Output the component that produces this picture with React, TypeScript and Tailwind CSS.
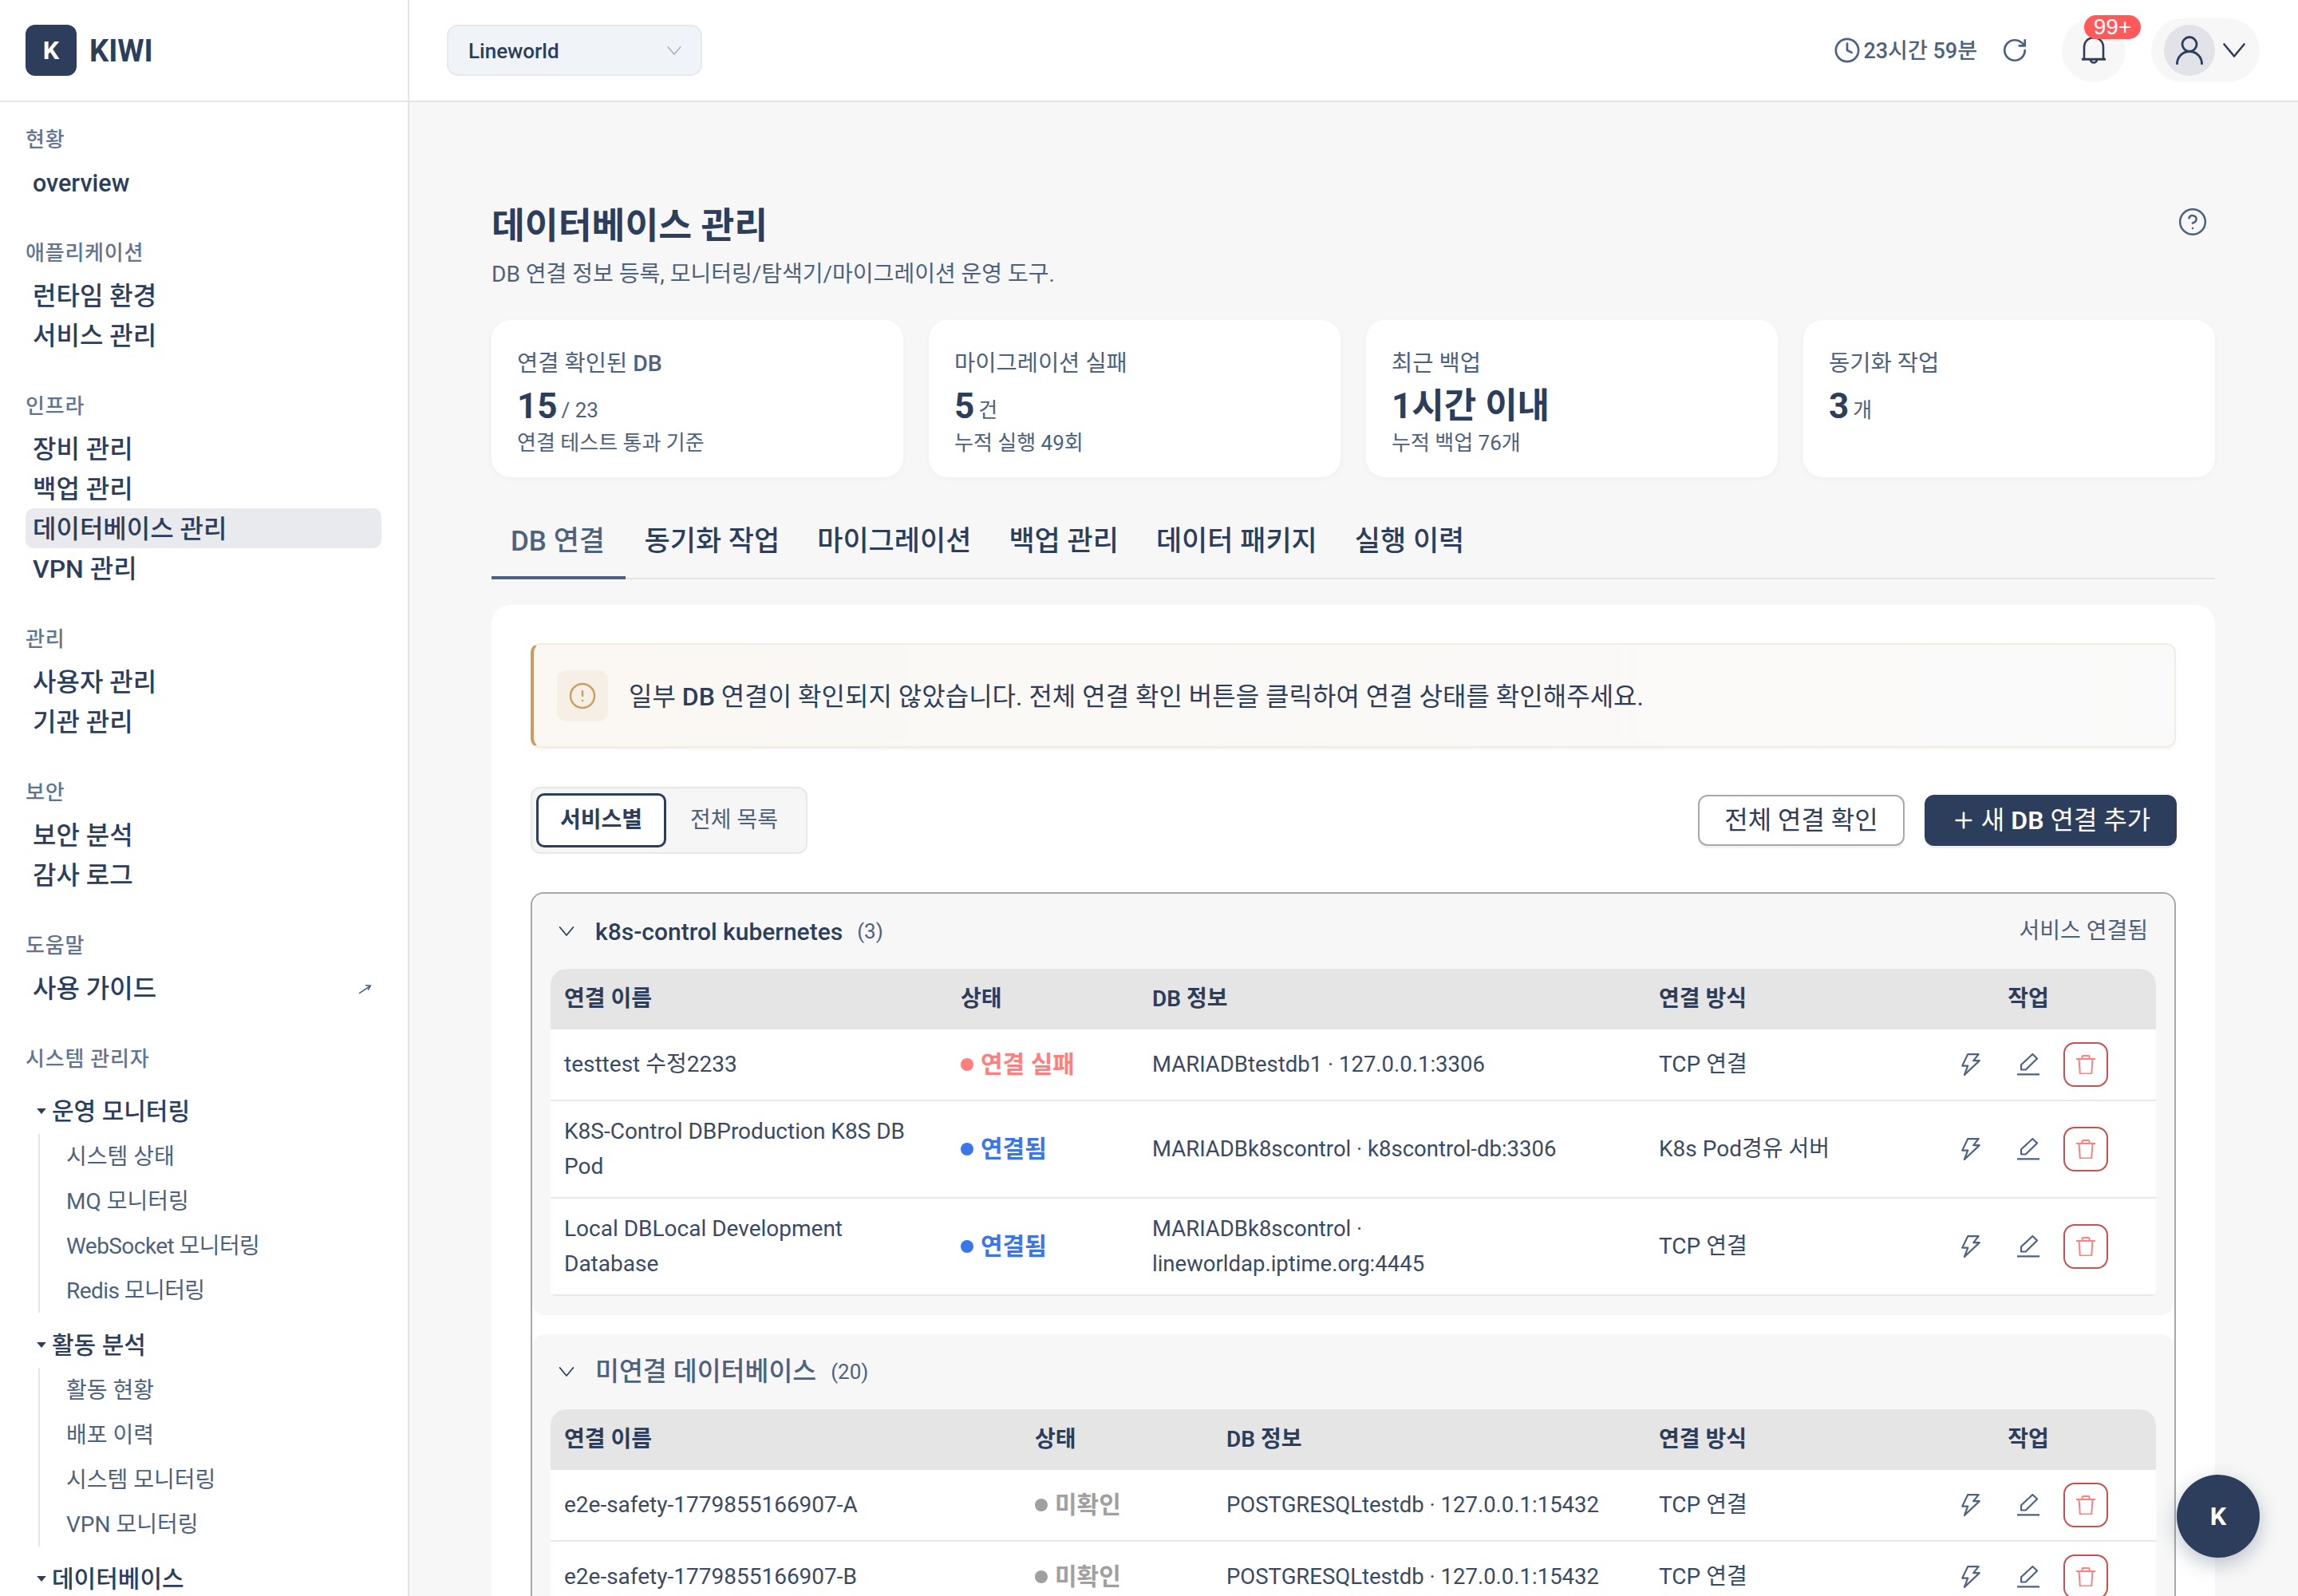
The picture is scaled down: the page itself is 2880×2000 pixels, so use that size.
import React from 'react';
import { Clock, RotateCw, CircleHelp, CircleAlert, Plus } from 'lucide-react';

const Chevron = ({ className = '' }: { className?: string }) => (
  <svg viewBox="0 0 28 18" fill="none" stroke="currentColor" strokeWidth="2.6" strokeLinecap="round" strokeLinejoin="round" className={className}>
    <path d="M1.5 1.5 14 16.5 26.5 1.5" />
  </svg>
);

const BoltIcon = () => (
  <svg viewBox="0 0 22 26" fill="none" stroke="#4d6180" strokeWidth="2" strokeLinejoin="round" className="h-[28px] w-[24px]">
    <path d="M7.5 1H20l-6 7.5h7L3.5 25l4-10.5H1z" />
  </svg>
);

const PencilIcon = () => (
  <svg viewBox="0 0 26 26" fill="none" stroke="#4d6180" strokeWidth="2" strokeLinejoin="round" className="h-[28px] w-[28px]">
    <path d="M4.7 19v-5.7L18 1l5.3 5L10 19z" />
    <path d="M0 24.5h26" strokeLinecap="round" />
  </svg>
);

const TrashIcon = () => (
  <svg viewBox="0 0 24 24" fill="none" stroke="#ff8080" strokeWidth="2" strokeLinecap="round" strokeLinejoin="round" className="h-[24px] w-[24px]">
    <path d="M0.5 5h23" />
    <path d="M3.5 5l1.2 17.5c0 .6.5 1 1 1h12.6c.5 0 1-.4 1-1L20.500 5" />
    <path d="M7.500 5V2c0-.6.5-1 1-1h7c.5 0 1 .4 1 1v3" />
  </svg>
);

const BellIcon = () => (
  <svg viewBox="0 0 30 34" fill="none" stroke="#2c3e5c" strokeWidth="2.6" strokeLinecap="round" className="h-[34px] w-[30px]">
    <path d="M3 28V13.500C3 6 8 1.300 15 1.300S27 6 27 13.500V28" />
    <path d="M1 28.300h28" strokeWidth="3" />
    <path d="M11 28.500a4 4 0 0 0 8 0" />
  </svg>
);

const PersonIcon = () => (
  <svg viewBox="0 0 34 36" fill="none" stroke="#2c3e5c" strokeWidth="2.800" strokeLinecap="round" className="h-[36px] w-[34px]">
    <circle cx="17" cy="10.500" r="9" />
    <path d="M1.500 35a15.500 15.500 0 0 1 31 0" />
  </svg>
);

const Section = ({ label, items, active }: { label: string; items: string[]; active?: string }) => (
  <div>
    <div className="mb-[10px] flex h-[36px] items-center text-[26px] font-medium tracking-[0.03em] text-[#64748f]">{label}</div>
    {items.map((item) => (
      <div
        key={item}
        className={`flex h-[50px] items-center rounded-[10px] px-[9px] font-medium text-[#2c3e5c] ${item === 'overview' ? 'pt-[3px] text-[30.500px]' : 'pt-[1px] text-[32px]'} ${item === active ? 'bg-[#e9eaee]' : ''}`}
      >
        {item}
        {item === '사용 가이드' && (
          <svg viewBox="0 0 16 12" fill="none" stroke="#4d6180" strokeWidth="1.500" className="mb-[-2px] ml-auto mr-[3px] h-[13px] w-[17px]">
            <path d="M1 11 14.500 2M8.500 1.500l6 .5-3 5" />
          </svg>
        )}
      </div>
    ))}
  </div>
);

const SubGroup = ({ label, items }: { label: string; items: string[] }) => (
  <div className="mt-[15px] first:mt-0">
    <div className="flex h-[50px] items-center pl-[14px] text-[30px] font-medium text-[#2c3e5c]">
      <svg viewBox="0 0 10 6" className="mr-[7px] h-[7px] w-[12px] fill-[#2c3e5c]">
        <path d="M0 0h10L5 6z" />
      </svg>
      {label}
    </div>
    {items.length > 0 && (
      <div className="ml-[16px] mt-[4px] border-l-2 border-[#e5e5e5] pl-[33px]">
        {items.map((item) => (
          <div
            key={item}
            className={`flex h-[56px] items-center pt-[1px] text-[28px] text-[#4d6180] ${/WebSocket|Redis/.test(item) ? 'tracking-[-0.02em]' : ''}`}
          >
            {item}
          </div>
        ))}
      </div>
    )}
  </div>
);

const Sidebar = () => (
  <aside className="flex h-full w-[513px] shrink-0 flex-col overflow-hidden border-r-2 border-[#e5e5e5] bg-white">
    <div className="flex h-[128px] shrink-0 items-center gap-[16px] border-b-2 border-[#e5e5e5] pl-[32px]">
      <div className="flex h-[64px] w-[64px] items-center justify-center rounded-[12px] bg-[#2c3e5c] text-[32px] font-bold text-white">K</div>
      <div className="pt-[2px] text-[38px] font-bold text-[#2c3e5c]">KIWI</div>
    </div>
    <nav className="flex flex-col gap-[46px] pl-[32px] pr-[33px] pt-[29px]">
      <Section label="현황" items={['overview']} />
      <Section label="애플리케이션" items={['런타임 환경', '서비스 관리']} />
      <Section label="인프라" items={['장비 관리', '백업 관리', '데이터베이스 관리', 'VPN 관리']} active="데이터베이스 관리" />
      <Section label="관리" items={['사용자 관리', '기관 관리']} />
      <Section label="보안" items={['보안 분석', '감사 로그']} />
      <Section label="도움말" items={['사용 가이드']} />
      <div>
        <div className="mb-[22px] flex h-[36px] items-center text-[26px] font-medium tracking-[0.03em] text-[#64748f]">시스템 관리자</div>
        <SubGroup label="운영 모니터링" items={['시스템 상태', 'MQ 모니터링', 'WebSocket 모니터링', 'Redis 모니터링']} />
        <SubGroup label="활동 분석" items={['활동 현황', '배포 이력', '시스템 모니터링', 'VPN 모니터링']} />
        <SubGroup label="데이터베이스" items={[]} />
      </div>
    </nav>
  </aside>
);

const TopBar = () => (
  <header className="flex h-[128px] shrink-0 items-center border-b-2 border-[#e5e5e5] bg-white pl-[47px] pr-[48px]">
    <div className="flex h-[64px] w-[320px] items-center justify-between rounded-[14px] border-2 border-[#e6e9ee] bg-[#f0f3f8] pl-[25px] pr-[24px] text-[26px] font-medium text-[#2c3e5c]">
      <span className="pt-[2px]">Lineworld</span>
      <Chevron className="h-[11px] w-[18px] text-[#a9b3c2]" />
    </div>
    <div className="ml-auto flex items-center text-[#4d6180]">
      <Clock size={34} strokeWidth={1.9} className="mr-[3px]" />
      <span className="pt-[2px] text-[27px] font-medium">23시간 59분</span>
      <RotateCw size={34} strokeWidth={1.9} className="ml-[30px] mr-[-2px]" />
    </div>
    <div className="relative ml-[44px] flex h-[80px] w-[80px] items-center justify-center rounded-full bg-[#f7f7f7]">
      <BellIcon />
      <span className="absolute left-[28px] top-[-4px] flex h-[30px] w-[71px] items-center justify-center rounded-full bg-[#ff5a5a] font-['Liberation_Sans',sans-serif] text-[28px] text-white">
        99+
      </span>
    </div>
    <div className="ml-[32px] flex h-[80px] w-[136px] items-center rounded-full bg-[#f7f7f7] pl-[16px]">
      <div className="flex h-[64px] w-[64px] items-center justify-center rounded-full bg-[#e1e3e8]">
        <PersonIcon />
      </div>
      <Chevron className="ml-[10px] h-[18px] w-[28px] text-[#2c3e5c]" />
    </div>
  </header>
);

const StatCard = ({ label, value, unit, sub }: { label: React.ReactNode; value: string; unit?: string; sub?: string }) => (
  <div className="h-[197px] rounded-[24px] bg-white px-[32px] pt-[35px] shadow-[0_2px_8px_rgba(0,0,0,0.03)]">
    <div className="text-[28.500px] leading-[40px] text-[#4d6180]">{label}</div>
    <div className="mt-[7px] flex h-[52px] items-end leading-[52px]">
      <span className="text-[44px] font-bold text-[#2c3e5c]">{value}</span>
      {unit && <span className="mb-[-5px] ml-[5px] text-[26px] text-[#4d6180]">{unit}</span>}
    </div>
    {sub && <div className="mt-[2px] text-[26px] leading-[36px] text-[#4d6180]">{sub}</div>}
  </div>
);

const tabs = ['DB 연결', '동기화 작업', '마이그레이션', '백업 관리', '데이터 패키지', '실행 이력'];

const Tabs = () => (
  <div className="mt-[32px] flex border-b-2 border-[#e5e5e5]">
    {tabs.map((tab, i) => (
      <div
        key={tab}
        className={`mb-[-2px] flex h-[96px] items-center border-b-4 pt-[6px] text-[35px] font-medium ${
          i === 0 ? 'w-[168px] border-[#4d6180] pl-[24px] text-[#4d6180]' : 'border-transparent px-[23.500px] text-[#2c3e5c]'
        }`}
      >
        {tab}
      </div>
    ))}
  </div>
);

const Alert = () => (
  <div className="flex h-[131px] items-center rounded-[12px] border-2 border-l-4 border-[#f3ece3] border-l-[#c99d5e] bg-gradient-to-r from-[#fbf8f3] to-[#fafafa] pl-[29px] shadow-[0_2px_3px_rgba(0,0,0,0.05)]">
    <div className="flex h-[64px] w-[64px] items-center justify-center rounded-[12px] bg-[#f5efe6]">
      <CircleAlert size={36} strokeWidth={1.6} className="text-[#c99d5e]" />
    </div>
    <div className="ml-[26px] pt-[2px] text-[32px] text-[#2c3e5c]">
      일부 <span className="font-medium">DB</span> 연결이 확인되지 않았습니다. 전체 연결 확인 버튼을 클릭하여 연결 상태를 확인해주세요.
    </div>
  </div>
);

const Toolbar = () => (
  <div className="mt-[49px] flex items-center justify-between">
    <div className="flex h-[84px] w-[347px] items-center rounded-[12px] border-2 border-[#e8e8e8] bg-[#f6f6f6] pl-[5px]">
      <div className="flex h-[68px] w-[163px] items-center justify-center rounded-[10px] border-[3px] border-[#2c3e5c] bg-white text-[28px] font-bold text-[#2c3e5c]">
        서비스별
      </div>
      <div className="px-[30px] pb-[1px] text-[28px] text-[#4d6180]">전체 목록</div>
    </div>
    <div className="mr-[-1px] flex gap-[25px]">
      <div className="flex h-[64px] w-[259px] items-center justify-center rounded-[12px] border-2 border-[#a8a8a8] bg-white text-[32px] text-[#2c3e5c] shadow-[0_3px_0_#f3f3f3]">
        전체 연결 확인
      </div>
      <div className="flex h-[64px] w-[316px] items-center justify-center rounded-[12px] bg-[#2c3e5c] text-[32px] text-white shadow-[0_3px_0_#eceef2]">
        <Plus size={32} strokeWidth={2} className="mr-[6px]" />새 <span className="mx-[8px] font-semibold">DB</span> 연결 추가
      </div>
    </div>
  </div>
);

type Status = 'fail' | 'ok' | 'unknown';

const statusStyle: Record<Status, { label: string; dot: string; text: string }> = {
  fail: { label: '연결 실패', dot: 'bg-[#ff7f7f]', text: 'text-[#ff7f7f]' },
  ok: { label: '연결됨', dot: 'bg-[#3a76e8]', text: 'text-[#3a76e8]' },
  unknown: { label: '미확인', dot: 'bg-[#a0a0a0]', text: 'text-[#a0a0a0]' },
};

interface Row {
  name: string;
  status: Status;
  info: string;
  via: string;
}

const StatusBadge = ({ status }: { status: Status }) => {
  const s = statusStyle[status];
  return (
    <span className="flex items-center gap-[9px]">
      <span className={`h-[16px] w-[16px] rounded-full ${s.dot}`} />
      <span className={`text-[30px] font-semibold ${s.text}`}>{s.label}</span>
    </span>
  );
};

const Actions = () => (
  <div className="flex w-[200px] items-center justify-between">
    <div className="flex h-[56px] w-[56px] items-center justify-center"><BoltIcon /></div>
    <div className="flex h-[56px] w-[56px] items-center justify-center"><PencilIcon /></div>
    <div className="flex h-[56px] w-[56px] items-center justify-center rounded-[14px] border-2 border-[#c85050]"><TrashIcon /></div>
  </div>
);

const DbTable = ({ rows, cols }: { rows: Row[]; cols: string }) => (
  <div className="overflow-hidden rounded-t-[20px] rounded-b-[6px] bg-white">
    <div className={`grid h-[76px] items-center bg-[#e5e5e5] text-[28px] font-semibold text-[#2c3e5c] ${cols}`}>
      <div className="px-[17px]">연결 이름</div>
      <div className="px-[17px]">상태</div>
      <div className="px-[17px]">DB 정보</div>
      <div className="px-[17px]">연결 방식</div>
      <div className="px-[17px]"><div className="w-[200px] text-center">작업</div></div>
    </div>
    {rows.map((row) => (
      <div key={row.name} className={`grid items-center border-b-2 border-[#e8e8e8] py-[16px] text-[28px] leading-[44px] text-[#3a4a65] ${cols}`}>
        <div className="px-[17px]">{row.name}</div>
        <div className="px-[17px]"><StatusBadge status={row.status} /></div>
        <div className="px-[17px] text-[27.500px]">{row.info}</div>
        <div className="px-[17px]">{row.via}</div>
        <div className="px-[17px]"><Actions /></div>
      </div>
    ))}
  </div>
);

const GroupHeader = ({ title, count, right, big }: { title: string; count: string; right?: string; big?: boolean }) => (
  <div className="flex h-[94px] items-center">
    <Chevron className="ml-[10px] h-[12px] w-[20px] text-[#2c3e5c]" />
    <span className={`ml-[26px] font-medium ${big ? 'text-[32.500px] text-[#4d6180]' : 'text-[30px] text-[#2c3e5c]'}`}>{title}</span>
    <span className="ml-[18px] text-[26px] text-[#4d6180]">{count}</span>
    {right && <span className="ml-auto mr-[10px] text-[28px] text-[#4d6180]">{right}</span>}
  </div>
);

const connected: Row[] = [
  { name: 'testtest 수정2233', status: 'fail', info: 'MARIADBtestdb1 · 127.0.0.1:3306', via: 'TCP 연결' },
  { name: 'K8S-Control DBProduction K8S DB Pod', status: 'ok', info: 'MARIADBk8scontrol · k8scontrol-db:3306', via: 'K8s Pod경유 서버' },
  { name: 'Local DBLocal Development Database', status: 'ok', info: 'MARIADBk8scontrol · lineworldap.iptime.org:4445', via: 'TCP 연결' },
];

const unlinked: Row[] = [
  { name: 'e2e-safety-1779855166907-A', status: 'unknown', info: 'POSTGRESQLtestdb · 127.0.0.1:15432', via: 'TCP 연결' },
  { name: 'e2e-safety-1779855166907-B', status: 'unknown', info: 'POSTGRESQLtestdb · 127.0.0.1:15432', via: 'TCP 연결' },
];

export default function App() {
  return (
    <div className="relative flex h-screen overflow-hidden bg-[#f7f7f7] font-['Roboto','Noto_Sans_CJK_KR',sans-serif]">
      <Sidebar />
      <div className="flex min-w-0 flex-1 flex-col">
        <TopBar />
        <main className="min-h-0 flex-1 overflow-hidden pl-[103px] pr-[104px] pt-[126px]">
          <div className="flex items-start justify-between">
            <div>
              <h1 className="text-[45.500px] font-bold leading-[60px] text-[#2c3e5c]">데이터베이스 관리</h1>
              <p className="mt-[10px] text-[28px] leading-[40px] text-[#4d6180]">DB 연결 정보 등록, 모니터링/탐색기/마이그레이션 운영 도구.</p>
            </div>
            <CircleHelp size={38} strokeWidth={1.6} className="mr-[9px] mt-[5px] text-[#4d6180]" />
          </div>

          <div className="mt-[37px] grid grid-cols-4 gap-[32px]">
            <StatCard label={<>연결 확인된 <span className="font-medium">DB</span></>} value="15" unit="/ 23" sub="연결 테스트 통과 기준" />
            <StatCard label="마이그레이션 실패" value="5" unit="건" sub="누적 실행 49회" />
            <StatCard label="최근 백업" value="1시간 이내" sub="누적 백업 76개" />
            <StatCard label="동기화 작업" value="3" unit="개" />
          </div>

          <Tabs />

          <section className="mt-[32px] rounded-t-[24px] bg-white px-[49px] pb-[40px] pt-[48px]">
            <Alert />
            <Toolbar />
            <div className="mt-[48px] rounded-t-[16px] border-2 border-b-0 border-[#a8a8a8]">
              <div className="rounded-[16px] bg-[#f7f7f7] px-[23px] pb-[24px]">
                <GroupHeader title="k8s-control kubernetes" count="(3)" right="서비스 연결됨" />
                <DbTable rows={connected} cols="grid-cols-[497px_240px_635px_363px_277px]" />
              </div>
              <div className="mt-[24px] rounded-[16px] bg-[#f7f7f7] px-[23px] pb-[24px]">
                <GroupHeader title="미연결 데이터베이스" count="(20)" big />
                <DbTable rows={unlinked} cols="grid-cols-[590px_240px_542px_363px_277px]" />
              </div>
            </div>
          </section>
        </main>
      </div>
      <div className="absolute left-[2728px] top-[1848px] flex h-[104px] w-[104px] items-center justify-center rounded-full bg-[#2c3e5c] text-[32px] font-bold text-white shadow-[0_8px_24px_rgba(44,62,92,0.3)]">
        K
      </div>
    </div>
  );
}
